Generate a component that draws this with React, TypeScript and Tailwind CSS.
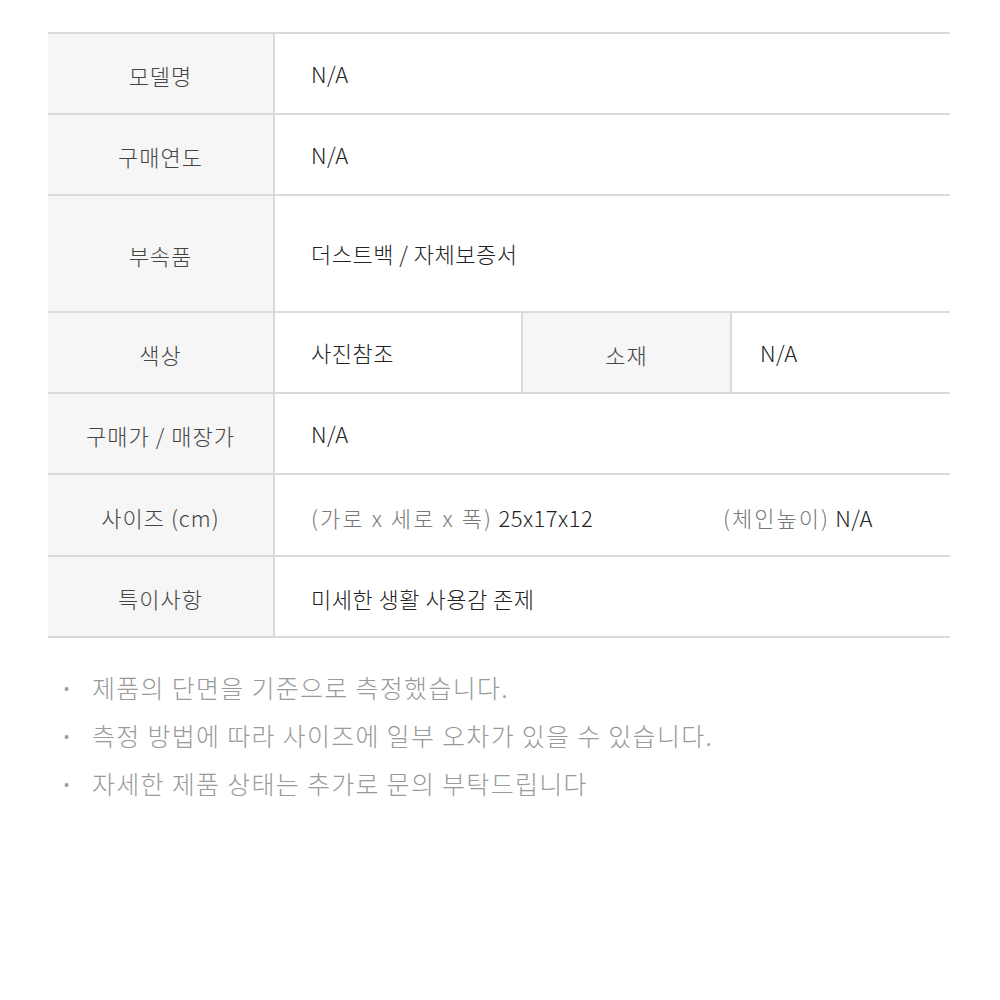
const font = { fontFamily: '"Noto Sans CJK KR", "Noto Sans", sans-serif' };

function Label({ children, className = "" }: { children: React.ReactNode; className?: string }) {
  return (
    <div
      className={`flex items-center justify-center bg-[#f6f6f6] text-[22px] tracking-[1px] text-[#444] pt-1 ${className}`}
    >
      {children}
    </div>
  );
}

function Row({ label, h, children }: { label: string; h: string; children: React.ReactNode }) {
  return (
    <div className={`flex border-b-2 border-[#dadada] ${h}`}>
      <Label className="w-[227px] shrink-0 border-r-2 border-[#dadada]">{label}</Label>
      <div className="flex-1 flex items-center text-[22px] tracking-[0.5px] text-[#222]">{children}</div>
    </div>
  );
}

const notes = [
  "제품의 단면을 기준으로 측정했습니다.",
  "측정 방법에 따라 사이즈에 일부 오차가 있을 수 있습니다.",
  "자세한 제품 상태는 추가로 문의 부탁드립니다",
];

export default function App() {
  return (
    <div className="w-[1000px] h-[1000px] bg-white px-[48px] pt-[32px] font-light" style={font}>
      <div className="border-t-2 border-[#dadada] w-[902px]">
        <Row label="모델명" h="h-[81px]">
          <span className="pl-[36px]">N/A</span>
        </Row>
        <Row label="구매연도" h="h-[81px]">
          <span className="pl-[36px]">N/A</span>
        </Row>
        <Row label="부속품" h="h-[117px]">
          <span className="pl-[36px]">더스트백 / 자체보증서</span>
        </Row>
        <Row label="색상" h="h-[81px]">
          <div className="flex h-full w-full">
            <div className="w-[248px] flex items-center pl-[36px] border-r-2 border-[#dadada]">사진참조</div>
            <Label className="w-[209px] border-r-2 border-[#dadada]">소재</Label>
            <div className="flex-1 flex items-center pl-[28px]">N/A</div>
          </div>
        </Row>
        <Row label="구매가 / 매장가" h="h-[81px]">
          <span className="pl-[36px]">N/A</span>
        </Row>
        <Row label="사이즈 (cm)" h="h-[82px]">
          <div className="flex pl-[36px] pt-1">
            <div className="w-[412px]">
              <span className="text-[#777] tracking-[2.1px]">(가로 x 세로 x 폭)</span> 25x17x12
            </div>
            <div>
              <span className="text-[#777] tracking-[2px]">(체인높이)</span> N/A
            </div>
          </div>
        </Row>
        <Row label="특이사항" h="h-[81px]">
          <span className="pl-[36px] pt-1">미세한 생활 사용감 존제</span>
        </Row>
      </div>
      <ul className="mt-[30px] flex flex-col gap-[10px] text-[25px] leading-[38px] tracking-[1.3px] text-[#9a9a9a]">
        {notes.map((n) => (
          <li key={n} className="flex items-center">
            <span className="w-[44px] pl-[16px] text-[16px]">•</span>
            <span>{n}</span>
          </li>
        ))}
      </ul>
    </div>
  );
}
